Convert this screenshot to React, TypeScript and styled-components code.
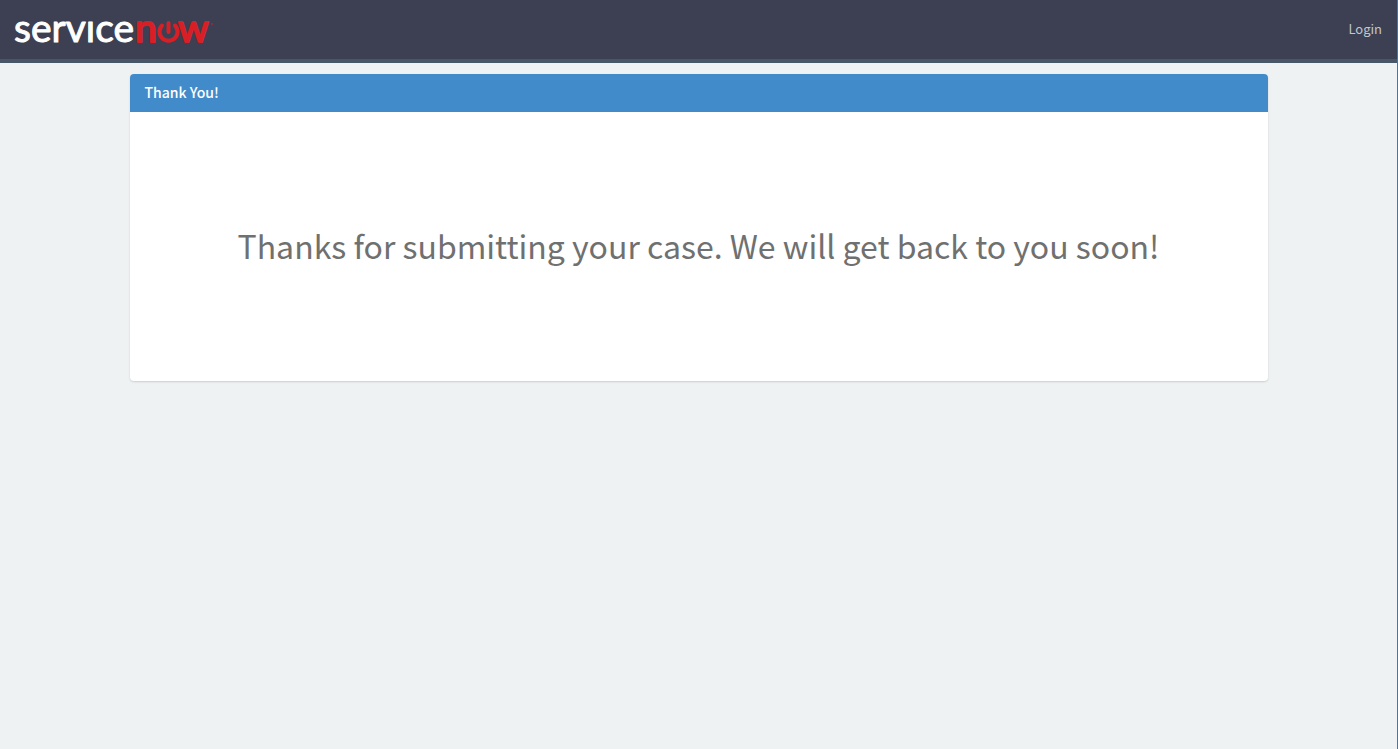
import React from "react";
import styled, { createGlobalStyle } from "styled-components";

const GlobalStyle = createGlobalStyle`
  * { box-sizing: border-box; }
  body {
    margin: 0;
    background: #eef2f3;
    color: #6f7070;
    font-family: "Noto Sans CJK SC", sans-serif;
    font-size: 13px;
    line-height: 18px;
  }
`;

const Page = styled.div`
  min-height: 100vh;
  border-right: 1px solid #2a7fc4;
`;

const Header = styled.header`
  display: flex;
  align-items: center;
  justify-content: space-between;
  height: 63px;
  padding: 0 15px;
  background: #3d4052;
  border-bottom: 4px solid #485767;
`;

const Brand = styled.a`
  display: flex;
  color: #fff;
  text-decoration: none;
`;

const Logo = styled.svg`
  display: block;
  width: 200px;
  height: 56px;
  overflow: visible;
  font-family: Lato, sans-serif;
  font-size: 39px;
`;

const LoginLink = styled.a`
  padding-bottom: 2px;
  color: #c3c6cb;
  text-decoration: none;
`;

const Main = styled.main`
  width: 100%;
  max-width: 1168px;
  margin: 0 auto;
  padding: 11px 15px;
`;

const Panel = styled.section`
  overflow: hidden;
  border-radius: 4px;
  background: #fff;
  box-shadow: 0 1px 2px rgba(0, 0, 0, 0.15);
`;

const PanelTitle = styled.h1`
  margin: 0;
  padding: 9px 15px 11px;
  background: #428bca;
  color: #fff;
  font-size: 14px;
  font-weight: 500;
`;

const Message = styled.p`
  margin: 0;
  padding: 108px 15px 111px;
  font-size: 32px;
  line-height: 50px;
  text-align: center;
`;

export default function App() {
  return (
    <Page>
      <GlobalStyle />
      <Header>
        <Brand href="#" aria-label="servicenow">
          <Logo viewBox="0 0 200 56" aria-hidden="true">
            <text x="-1" y="40" fill="#fff" stroke="#fff" strokeWidth="1" strokeLinejoin="round">servıce</text>
            <g fill="#d81f26" stroke="#d81f26" strokeWidth="2" strokeLinejoin="round">
              <text x="120" y="40">n</text>
              <text x="163" y="40">w</text>
            </g>
            <path
              d="M147 23.500A9 9 0 1 0 160 23.500M153.500 21V30"
              fill="none"
              stroke="#d81f26"
              strokeWidth="4"
              strokeLinecap="round"
            />
            <circle cx="197" cy="22" r="1" fill="#9b2b3b" />
          </Logo>
        </Brand>
        <LoginLink href="#">Login</LoginLink>
      </Header>
      <Main>
        <Panel>
          <PanelTitle>Thank You!</PanelTitle>
          <Message>Thanks for submitting your case. We will get back to you soon!</Message>
        </Panel>
      </Main>
    </Page>
  );
}
